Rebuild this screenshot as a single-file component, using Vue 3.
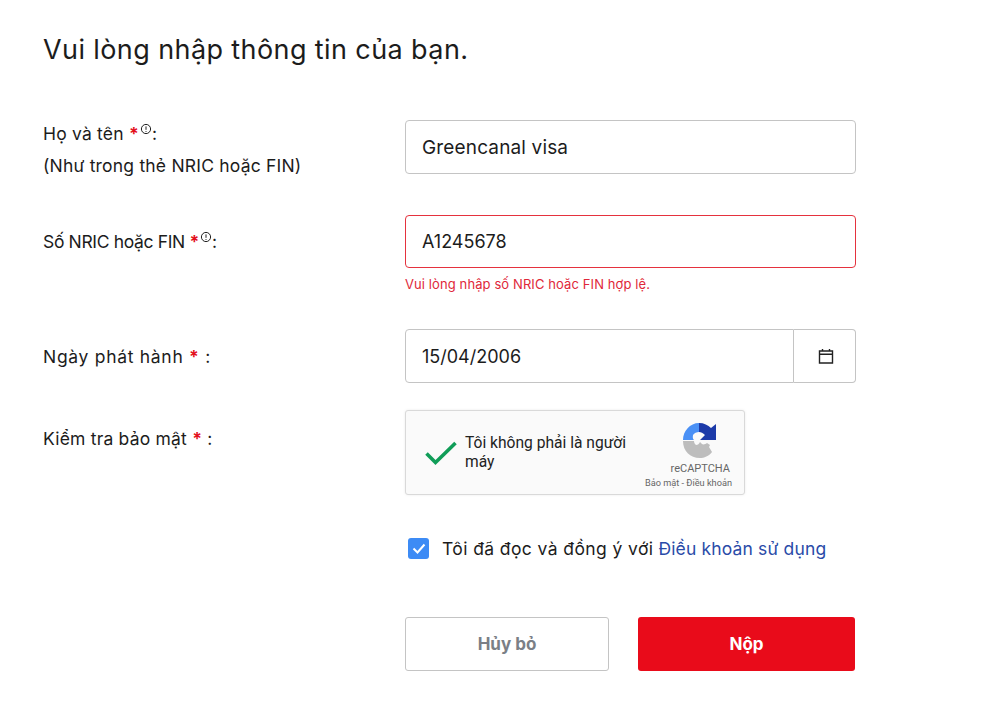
<template>
  <div class="page">
    <h1 class="title">Vui lòng nhập thông tin của bạn.</h1>

    <form class="form" @submit.prevent>
      <!-- HO TEN -->
      <div class="row row-name">
        <label class="label">
          Họ và tên <span class="req">*</span><svg class="info" viewBox="0 0 12 12"><circle cx="6" cy="6" r="4.6" /><path d="M6 3.4v3.4M6 8v.9" /></svg>:<br />
          (Như trong thẻ NRIC hoặc FIN)
        </label>
        <div class="field">
          <input class="input input-name" v-model="name" />
        </div>
      </div>

      <!-- NRIC -->
      <div class="row row-nric">
        <label class="label label-nric">
          Số NRIC hoặc FIN <span class="req">*</span><svg class="info" viewBox="0 0 12 12"><circle cx="6" cy="6" r="4.6" /><path d="M6 3.4v3.4M6 8v.9" /></svg>:
        </label>
        <div class="field">
          <input class="input invalid" v-model="nric" />
          <p class="error">Vui lòng nhập số NRIC hoặc FIN hợp lệ.</p>
        </div>
      </div>

      <!-- NGAY -->
      <div class="row row-date">
        <label class="label label-date">Ngày phát hành <span class="req">*</span> :</label>
        <div class="field date-group">
          <input class="input date-input" v-model="date" />
          <button type="button" class="date-btn">
            <svg width="16" height="16" viewBox="0 0 16 16">
              <path d="M1.5 3h13v12h-13zM1.5 6.2h13M4.5 1v2M11.5 1v2" fill="none" stroke="#222" stroke-width="1.4" />
            </svg>
          </button>
        </div>
      </div>

      <!-- CAPTCHA -->
      <div class="row row-captcha">
        <label class="label">Kiểm tra bảo mật <span class="req">*</span> :</label>
        <div class="field">
          <div class="captcha">
            <svg class="tick" width="34" height="26" viewBox="0 0 34 26">
              <path d="M2.5 13.5l9 9L31.5 3" fill="none" stroke="#109d58" stroke-width="3.6" />
            </svg>
            <span class="captcha-text">Tôi không phải là người máy</span>
            <div class="captcha-brand">
              <svg class="recaptcha-logo" width="36" height="36" viewBox="0 0 36 36">
                <path d="M17 0C8 0 1 8 1 17h11c-1-1-1.500-2-1-5 1-2 4-3 6-3z" fill="#4a90f5" />
                <path d="M17 0c5 0 9 2 12 5l5-4v16H18l5-5c-2-2-4-3-6-3z" fill="#1c3aa9" />
                <path d="M1 18h11c0 2 1 3 2 4 2 0 3-1 4-3l2 2c1 1 4 0 5-1l3 2-1 2 3 5c-3 4-8 6-12 6C8 35 1 28 1 18z" fill="#bdbdbd" />
              </svg>
              <span class="brand-name">reCAPTCHA</span>
              <span class="brand-links">Bảo mật - Điều khoản</span>
            </div>
          </div>
        </div>
      </div>

      <!-- DIEU KHOAN -->
      <div class="row row-terms">
        <div></div>
        <label class="terms">
          <span class="check">
            <svg width="14" height="11" viewBox="0 0 14 11"><path d="M1.500 5.500l4 4 7-8" fill="none" stroke="#fff" stroke-width="2" /></svg>
          </span>
          Tôi đã đọc và đồng ý với<a class="terms-link" href="#">Điều khoản sử dụng</a>
        </label>
      </div>

      <!-- BUTTONS -->
      <div class="row row-actions">
        <div></div>
        <div class="actions">
          <button type="button" class="btn btn-cancel">Hủy bỏ</button>
          <button type="submit" class="btn btn-submit">Nộp</button>
        </div>
      </div>
    </form>
  </div>
</template>

<script setup>
import { ref } from 'vue'

const name = ref('Greencanal visa')
const nric = ref('A1245678')
const date = ref('15/04/2006')
</script>

<style>
html, body {
  background: #fff;
}
</style>

<style scoped>
.page {
  padding: 32px 0 0 43px;
  height: 673px;
  font-family: Inter, "Liberation Sans", sans-serif;
  color: #1c1c1c;
}

.title {
  margin: 0 0 52px;
  font-size: 27px;
  line-height: 36px;
  font-weight: 400;
  letter-spacing: 0.4px;
}

.row {
  display: grid;
  grid-template-columns: 362px 451px;
}

.label {
  font-size: 17.5px;
  line-height: 32px;
  letter-spacing: 0.2px;
}

.label-nric {
  letter-spacing: -0.35px;
}

.label-date {
  letter-spacing: 0.7px;
}

.req {
  color: #e30f1c;
  font-weight: 700;
}

.info {
  width: 12px;
  height: 12px;
  margin-left: 1px;
  vertical-align: 5px;
  fill: none;
  stroke: #222;
  stroke-width: 1;
}

/* ===== input ===== */
.input {
  display: block;
  box-sizing: border-box;
  width: 100%;
  height: 54px;
  padding: 0 16px;
  border: 1px solid #c4c4c4;
  border-radius: 4px;
  background: #fff;
  font: 400 18px Inter, "Liberation Sans", sans-serif;
  color: #1c1c1c;
  outline: none;
}

.input-name {
  font-size: 19px;
  letter-spacing: 0.15px;
}

.invalid {
  height: 53px;
  border-color: #e5323e;
}

.error {
  margin: 8px 0 0;
  font-size: 13px;
  line-height: 16px;
  letter-spacing: 0.1px;
  color: #e0283a;
}

.row-name { margin-bottom: 33px; }
.row-name .label { margin-top: -2px; }
.row-nric { margin-bottom: 37px; }
.row-nric .label { margin-top: 11px; }
.row-date { margin-bottom: 27px; }
.row-date .label { margin-top: 12px; }
.row-captcha { margin-bottom: 42px; }
.row-captcha .label { margin-top: 13px; }
.row-terms { margin-bottom: 58px; }

.date-group {
  display: flex;
}

.date-input {
  flex: 1;
  border-radius: 4px 0 0 4px;
}

.date-btn {
  display: flex;
  align-items: center;
  justify-content: center;
  width: 62px;
  height: 54px;
  padding: 0 0 0 2px;
  border: 1px solid #c4c4c4;
  border-left: 0;
  border-radius: 0 4px 4px 0;
  background: #fff;
}

/* ===== captcha ===== */
.captcha {
  position: relative;
  box-sizing: border-box;
  display: flex;
  align-items: center;
  width: 340px;
  height: 85px;
  padding-left: 18px;
  border: 1px solid #d9d9d9;
  border-radius: 3px;
  background: #fafafa;
  box-shadow: 0 0 3px rgba(0, 0, 0, 0.08);
}

.tick {
  flex: none;
}

.captcha-text {
  width: 175px;
  margin-left: 7px;
  font-family: Roboto, "Liberation Sans", sans-serif;
  font-size: 15.6px;
  line-height: 19px;
  color: #222;
}

.captcha-brand {
  position: absolute;
  top: 12px;
  right: 12px;
  display: flex;
  flex-direction: column;
  align-items: flex-end;
  font-family: Roboto, "Liberation Sans", sans-serif;
  color: #666;
}

.recaptcha-logo {
  margin: 0 14px 3px 0;
}

.brand-name {
  margin-right: 2px;
  font-size: 11px;
  line-height: 14px;
}

.brand-links {
  font-size: 9.2px;
  line-height: 13px;
  white-space: nowrap;
}

/* ===== terms ===== */
.terms {
  display: flex;
  align-items: center;
  height: 22px;
  padding-left: 3px;
  font-size: 17.5px;
  letter-spacing: 0.4px;
}

.check {
  display: flex;
  align-items: center;
  justify-content: center;
  width: 21px;
  height: 21px;
  margin-right: 13px;
  border-radius: 3px;
  background: #3d8bf5;
}

.terms-link {
  margin-left: 5px;
  letter-spacing: 0.15px;
  color: #2a4ba8;
  text-decoration: none;
}

/* ===== buttons ===== */
.actions {
  display: flex;
  gap: 29px;
}

.btn {
  height: 54px;
  border-radius: 3px;
  font: 700 17px Inter, "Liberation Sans", sans-serif;
}

.btn-cancel {
  width: 204px;
  border: 1px solid #c4c4c4;
  background: #fff;
  color: #7b7f86;
}

.btn-submit {
  width: 217px;
  border: 0;
  background: #e90b1a;
  color: #fff;
}
</style>
